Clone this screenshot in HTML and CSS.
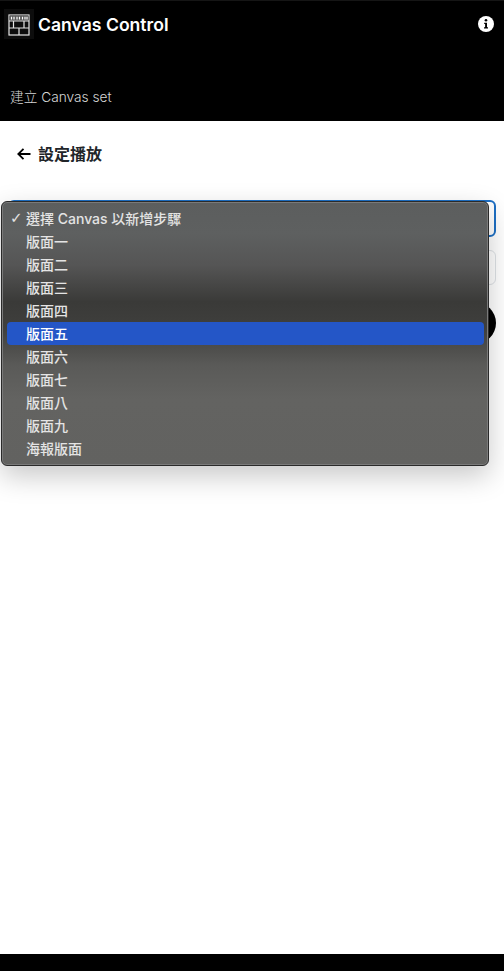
FILE: index.html
```html
<!DOCTYPE html>
<html lang="zh-Hant">
<head>
<meta charset="utf-8">
<title>Canvas Control</title>
<link rel="stylesheet" href="styles.css">
</head>
<body>
<div class="page">
  <header class="header">
    <div class="brand">
      <div class="logo">
        <svg class="logo-art" width="22" height="22" viewBox="0 0 22 22" fill="none" stroke="#e4e4e4" stroke-width="1.2">
          <rect x="1" y="1" width="20" height="20"/>
          <rect x="1.500" y="1.500" width="19" height="5" fill="#5a5a5a" stroke="none"/>
          <path d="M3.500 2.800v2.600M6 2.800v2.600M9 2.800v2.600M11.500 2.800v2.600M14.500 2.800v2.600M17 2.800v2.600M19 2.800v2.600" stroke="#fff" stroke-width="1.200"/>
          <path d="M1 7h20M1 14h20M5.500 7v7M16 7v7M11 14v7"/>
        </svg>
      </div>
      <h1 class="title">Canvas Control</h1>
      <svg class="info" width="16" height="16" viewBox="0 0 16 16">
        <circle cx="8" cy="8" r="8" fill="#fff"/>
        <circle cx="8" cy="4.300" r="1.300" fill="#000"/>
        <path d="M6.200 6.800h2.800v4.400h1v1.300H6v-1.300h1.100V8.100H6.200z" fill="#000"/>
      </svg>
    </div>
    <p class="subtitle">建立 Canvas set</p>
  </header>
  <main class="main">
    <div class="back">
      <svg width="14" height="14" viewBox="0 0 14 14" fill="none" stroke="#000" stroke-width="1.800">
        <path d="M13.500 7H1.500M6.500 1.800 1.300 7l5.200 5.200"/>
      </svg>
      <h2 class="back-title">設定播放</h2>
    </div>
    <div class="form">
      <div class="select-box"></div>
      <div class="input-box"></div>
      <div class="round-row"><div class="round-btn"></div></div>
    </div>
    <ul class="menu">
      <li class="item"><span class="check">✓</span>選擇 Canvas 以新增步驟</li>
      <li class="item">版面一</li>
      <li class="item">版面二</li>
      <li class="item">版面三</li>
      <li class="item">版面四</li>
      <li class="item selected">版面五</li>
      <li class="item">版面六</li>
      <li class="item">版面七</li>
      <li class="item">版面八</li>
      <li class="item">版面九</li>
      <li class="item">海報版面</li>
    </ul>
  </main>
  <footer class="footer"></footer>
</div>
</body>
</html>
```
FILE: styles.css
```css
* { box-sizing: border-box; }
html, body { margin: 0; padding: 0; }
body {
  background: #fff;
  font-family: Inter, "Noto Sans CJK TC", sans-serif;
}
.page {
  display: flex;
  flex-direction: column;
  height: 971px;
  overflow: hidden;
}
.header {
  height: 121px;
  background: #000;
  border-top: 1px solid #151515;
  padding: 8px 10px 0 4px;
  flex: none;
}
.brand {
  display: flex;
  align-items: center;
  height: 30px;
}
.logo {
  width: 30px;
  height: 30px;
  background: #0d0d0d;
  display: flex;
  align-items: center;
  padding-left: 4px;
  padding-top: 1px;
  flex: none;
}
.logo-art { flex: none; }
.title {
  margin: 0;
  flex: 1;
  color: #fff;
  font-size: 17.600px;
  font-weight: 600;
  line-height: 30px;
  padding-left: 4px;
  padding-top: 2px;
}
.info { flex: none; }
.subtitle {
  margin: 0;
  padding: 48px 0 0 6px;
  color: #d6d6d6;
  font-size: 13.700px;
  line-height: 20px;
  font-weight: 300;
}
.main {
  position: relative;
  flex: 1;
  padding: 0 8px;
}
.back {
  display: flex;
  align-items: center;
  gap: 7px;
  height: 24px;
  margin-top: 21px;
  padding-left: 9px;
}
.back-title {
  margin: 0;
  color: #212529;
  font-size: 16px;
  font-weight: 600;
  line-height: 24px;
}
.form {
  display: flex;
  flex-direction: column;
  margin-top: 34px;
}
.select-box {
  height: 37px;
  border: 2px solid #1d6fc4;
  border-radius: 6px;
  background: #fff;
}
.input-box {
  height: 35px;
  margin-top: 13px;
  border: 1px solid #dee2e6;
  border-radius: 6px;
  background: #fff;
}
.round-row {
  display: flex;
  justify-content: flex-end;
  margin-top: 17px;
}
.round-btn {
  width: 42px;
  height: 42px;
  border-radius: 50%;
  background: #000;
}
.menu {
  position: absolute;
  left: 1px;
  top: 80px;
  width: 488px;
  height: 265px;
  margin: 0;
  padding: 5px 4px 5px 5px;
  list-style: none;
  border: 1px solid #2a2a2a;
  border-radius: 6px;
  background: linear-gradient(180deg, #5c5e5e 0%, #5e6060 12%, #555 24%, #3a3a38 38%, #3f3f3d 48%, #5a5a58 62%, #636361 75%, #626260 100%);
  box-shadow: inset 0 0 0 1px #7a7a7a, 0 10px 28px rgba(0, 0, 0, .22);
  color: #e4e4e4;
  font-size: 14px;
  font-weight: 500;
}
.item {
  position: relative;
  height: 23px;
  line-height: 23px;
  padding-left: 19px;
  border-radius: 4px;
  white-space: nowrap;
}
.selected {
  background: #2456c7;
  color: #fff;
}
.check {
  position: absolute;
  left: 3px;
  top: 0;
  font-size: 15px;
  font-family: "DejaVu Sans", sans-serif;
}
.footer {
  height: 17px;
  flex: none;
  background: #000;
}
```
